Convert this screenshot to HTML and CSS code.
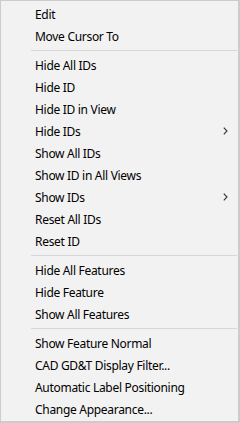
FILE: index.html
```html
<!DOCTYPE html>
<html lang="en">
  <head>
    <meta charset="UTF-8" />
    <meta name="viewport" content="width=device-width, initial-scale=1.0" />
    <title>Context Menu</title>
    <link rel="stylesheet" href="styles.css">
  </head>
  <body>
    <ul class="menu">
      <li class="item">Edit</li>
      <li class="item">Move Cursor To</li>
      <li class="sep"></li>
      <li class="item">Hide All IDs</li>
      <li class="item">Hide ID</li>
      <li class="item">Hide ID in View</li>
      <li class="item sub">Hide IDs
        <svg class="arrow" width="5" height="8" viewBox="0 0 5 8"><polyline points="0.8,0.6 4,4 0.8,7.4" /></svg>
      </li>
      <li class="item">Show All IDs</li>
      <li class="item">Show ID in All Views</li>
      <li class="item sub">Show IDs
        <svg class="arrow" width="5" height="8" viewBox="0 0 5 8"><polyline points="0.8,0.6 4,4 0.8,7.4" /></svg>
      </li>
      <li class="item">Reset All IDs</li>
      <li class="item">Reset ID</li>
      <li class="sep"></li>
      <li class="item">Hide All Features</li>
      <li class="item">Hide Feature</li>
      <li class="item">Show All Features</li>
      <li class="sep"></li>
      <li class="item">Show Feature Normal</li>
      <li class="item">CAD GD&amp;T Display Filter...</li>
      <li class="item">Automatic Label Positioning</li>
      <li class="item">Change Appearance...</li>
    </ul>
  </body>
</html>
```

FILE: styles.css
```css
body {
  margin: 0;
  background-color: #ffffff;
  font-family: "Noto Sans", "Open Sans", sans-serif;
}

.menu {
  list-style: none;
  margin: 0;
  padding: 2px 0 1px 0;
  width: 240px;
  height: 423px;
  box-sizing: border-box;
  background-color: #f2f2f2;
  border-top: 1px solid #cccccc;
  border-left: 1px solid #cccccc;
  border-right: 2px solid #cccccc;
  border-bottom: 2px solid #cccccc;
}

.item {
  display: flex;
  align-items: center;
  justify-content: space-between;
  height: 22px;
  padding: 0 10px 0 34px;
  font-size: 12px;
  letter-spacing: -0.3px;
  color: #000000;
  white-space: nowrap;
}

.arrow {
  display: block;
  fill: none;
  stroke: #333333;
  stroke-width: 1.1;
}

.sep {
  height: 7px;
  display: flex;
  align-items: center;
  margin: 0 1px 0 30px;
}

.sep::before {
  content: "";
  display: block;
  width: 100%;
  height: 1px;
  background-color: #d7d7d7;
}
```
